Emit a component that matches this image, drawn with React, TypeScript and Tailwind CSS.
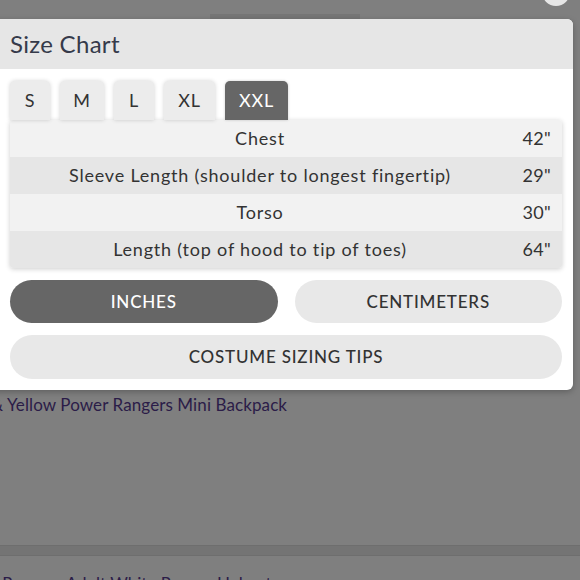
const rows = [
  { label: 'Chest', value: '42"' },
  { label: 'Sleeve Length (shoulder to longest fingertip)', value: '29"' },
  { label: 'Torso', value: '30"' },
  { label: 'Length (top of hood to tip of toes)', value: '64"' },
];

const sizes = [
  { label: 'S', width: 'w-[40px]' },
  { label: 'M', width: 'w-[44px]' },
  { label: 'L', width: 'w-[40px]' },
  { label: 'XL', width: 'w-[51px]' },
  { label: 'XXL', width: 'w-[63px]' },
];

export default function App() {
  const active = 'XXL';

  return (
    <div
      className="relative w-[580px] h-[580px] overflow-hidden bg-[#7f7f7f]"
      style={{ fontFamily: 'Lato, "Open Sans", sans-serif' }}
    >
      {/* page behind the overlay */}
      <div className="flex flex-col">
        <div className="h-[14px]" />
        <div className="ml-[210px] w-[150px] h-[5px] bg-[#767676]" />
        <div className="h-[371px]" />
        <div className="pt-[2px] text-[17px] text-[#2b1c48] whitespace-nowrap tracking-[0.1px]">
          <span className="ml-[-9px]">&amp; Yellow Power Rangers Mini Backpack</span>
        </div>
        <div className="mt-[127px] h-[11px] bg-[#747474] border-y border-[#6e6e6e]" />
        <div className="pt-[15px] text-[17px] text-[#2b1c48] whitespace-nowrap">
          <span className="ml-[-6px]">, Rangers Adult White Ranger Helmet</span>
        </div>
      </div>

      {/* close button peeking from top */}
      <div className="absolute left-[542px] top-[-22px] w-[28px] h-[28px] rounded-full bg-[#e6e6e6]" />

      {/* modal */}
      <div className="absolute left-[-10px] top-[19px] w-[583px] rounded-r-[6px] bg-white overflow-hidden shadow-[0_2px_6px_rgba(0,0,0,0.25)]">
        <div className="h-[50px] bg-[#e6e6e6] pl-[20px] flex items-center">
          <h2 className="text-[24px] text-[#353a4a] tracking-[0.3px]">Size Chart</h2>
        </div>

        <div className="pl-[20px] pr-[11px] pt-[12px] pb-[11px] tracking-[0.8px]">
          <div className="flex gap-[10px]">
            {sizes.map((s) => (
              <button
                key={s.label}
                className={
                  s.label === active
                    ? `${s.width} h-[39px] rounded-t-[5px] bg-[#666666] text-white text-[18px] shadow-[0_0_3px_rgba(0,0,0,0.2)]`
                    : `${s.width} h-[39px] rounded-t-[5px] bg-[#ececec] text-[#333] text-[18px] shadow-[0_0_4px_rgba(0,0,0,0.18)]`
                }
              >
                {s.label}
              </button>
            ))}
          </div>

          <div className="rounded-[3px] shadow-[0_1px_5px_rgba(0,0,0,0.2)] overflow-hidden">
            {rows.map((r, i) => (
              <div
                key={r.label}
                className={`flex items-center h-[37px] text-[18px] text-[#333] ${i % 2 === 0 ? 'bg-[#f2f2f2]' : 'bg-[#e6e6e6]'}`}
              >
                <div className="flex-1 text-center">{r.label}</div>
                <div className="w-[52px] text-right pr-[11px] tracking-[0.3px]">{r.value}</div>
              </div>
            ))}
          </div>

          <div className="mt-[12px] grid grid-cols-2 gap-[17px]">
            <button className="h-[43px] rounded-full bg-[#666666] text-white text-[17px] font-medium">
              INCHES
            </button>
            <button className="h-[43px] rounded-full bg-[#e8e8e8] text-[#333] text-[17px] font-medium">
              CENTIMETERS
            </button>
          </div>
          <button className="mt-[12px] w-full h-[44px] rounded-full bg-[#e8e8e8] text-[#333] text-[17px] font-medium">
            COSTUME SIZING TIPS
          </button>
        </div>
      </div>
    </div>
  );
}
